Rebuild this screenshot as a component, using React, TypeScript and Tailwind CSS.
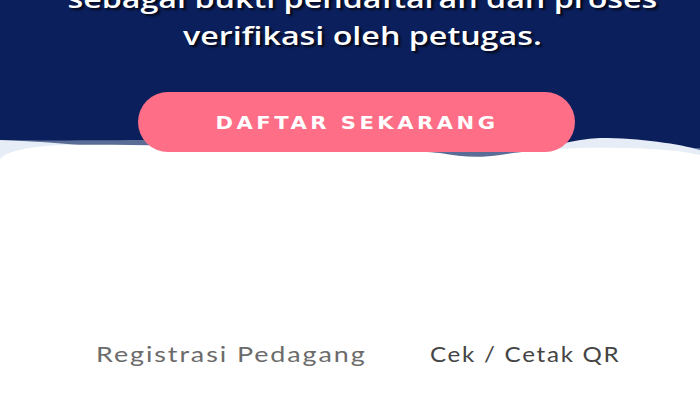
export default function App() {
  return (
    <div className="w-[700px] h-[400px] overflow-hidden bg-white">
      {/* hero */}
      <section className="relative flex flex-col h-[160px] bg-[#0b1f5c]">
        <div
          className="relative z-10 flex flex-col items-center mt-[-20px] pl-[20px] text-center text-white text-[26px] leading-[37px] font-semibold scale-x-[1.24] [text-shadow:2px_2px_2px_rgba(0,0,0,0.75)]"
          style={{ fontFamily: '"Open Sans", sans-serif' }}
        >
          <p>sebagai bukti pendaftaran dan proses</p>
          <p>verifikasi oleh petugas.</p>
        </div>
        <div className="relative z-10 flex justify-center pl-[13px] mt-[38px]">
          <button className="w-[437px] h-[60px] rounded-full bg-[#fe6e87] text-white">
            <span
              className="inline-block text-[18px] font-bold tracking-[3px] scale-x-[1.17]"
              style={{ fontFamily: '"DejaVu Sans", sans-serif' }}
            >
              DAFTAR SEKARANG
            </span>
          </button>
        </div>
        <svg
          className="absolute left-0 bottom-0 w-[700px] h-[40px]"
          viewBox="0 0 700 40"
          preserveAspectRatio="none"
        >
          <path
            d="M0 20 C60 21 100 20 160 20 C300 26 420 30 520 31 C600 29 660 27 700 28 L700 40 L0 40 Z"
            fill="#5b6c96"
          />
          <path
            d="M0 20 C30 21 60 23 90 26 C200 30 400 36 500 40 C540 30 570 19 600 18 C640 18 680 24 700 30 L700 40 L0 40 Z"
            fill="#e6edf7"
          />
          <path
            d="M0 39 C8 30 30 27 60 25 C120 24 200 26 300 28 C380 30 420 31 440 33 C460 37 480 38 500 35 C520 32 540 29 580 28 C640 27 680 30 700 35 L700 40 L0 40 Z"
            fill="#ffffff"
          />
        </svg>
      </section>

      {/* links */}
      <nav
        className="flex pl-[96px] mt-[178px] text-[21px] tracking-[1.5px]"
        style={{ fontFamily: 'Lato, sans-serif' }}
      >
        <a className="w-[334px] origin-left scale-x-[1.28] text-[#6b6b6b]">
          Registrasi Pedagang
        </a>
        <a className="origin-left scale-x-[1.15] text-[#444444]">Cek / Cetak QR</a>
      </nav>
    </div>
  );
}
